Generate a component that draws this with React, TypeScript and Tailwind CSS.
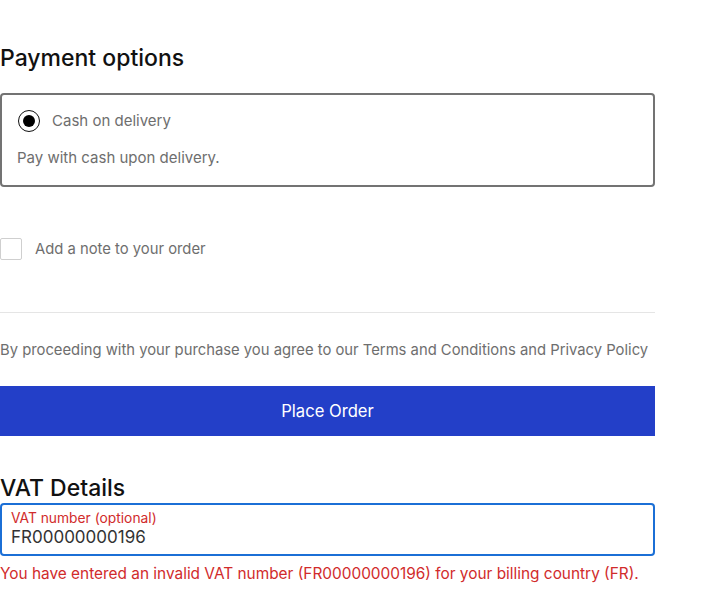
import React from "react";

export default function App() {
  return (
    <div className="w-[704px] h-[593px] bg-white overflow-hidden" style={{ fontFamily: "Inter, 'Noto Sans', sans-serif" }}>
      <div className="w-[655px] pt-[43px]">
        <h2 className="text-[23px] leading-[30px] font-medium text-[#111]">Payment options</h2>
        <div className="mt-[20px] h-[94px] border-2 border-[#737373] rounded-[4px] px-[15px] pt-[15px]">
          <div className="flex items-center gap-[12px]">
            <span className="ml-[1px] w-[22px] h-[22px] rounded-full border-[1.5px] border-[#111] flex items-center justify-center">
              <span className="w-[12px] h-[12px] rounded-full bg-black" />
            </span>
            <span className="text-[15px] text-[#6e6e6e]">Cash on delivery</span>
          </div>
          <p className="mt-[15px] text-[15px] text-[#6e6e6e] leading-[20px]">Pay with cash upon delivery.</p>
        </div>
        <div className="mt-[51px] flex items-center gap-[13px]">
          <span className="w-[22px] h-[22px] border border-[#cfcfcf] rounded-[2px]" />
          <span className="text-[14.8px] text-[#6e6e6e]">Add a note to your order</span>
        </div>
        <div className="mt-[52px] border-t border-[#e5e5e5]" />
        <p className="mt-[27px] text-[14.8px] leading-[20px] text-[#6e6e6e] whitespace-nowrap">
          By proceeding with your purchase you agree to our Terms and Conditions and Privacy Policy
        </p>
        <button className="mt-[26px] w-full h-[50px] bg-[#233fc8] text-white text-[16.6px] flex items-center justify-center">
          Place Order
        </button>
        <h2 className="mt-[39px] text-[23px] leading-[26px] font-medium text-[#111]">VAT Details</h2>
        <div className="mt-[2px] h-[53px] border-2 border-[#1b6fd6] rounded-[4px] px-[9px] pt-[5px]">
          <div className="text-[13.8px] leading-[17px] text-[#d12b2b]">VAT number (optional)</div>
          <div className="text-[17px] leading-[21px] text-[#333]">FR00000000196</div>
        </div>
        <p className="mt-[8px] text-[15.4px] leading-[20px] text-[#d12b2b] whitespace-nowrap">
          You have entered an invalid VAT number (FR00000000196) for your billing country (FR).
        </p>
      </div>
    </div>
  );
}
